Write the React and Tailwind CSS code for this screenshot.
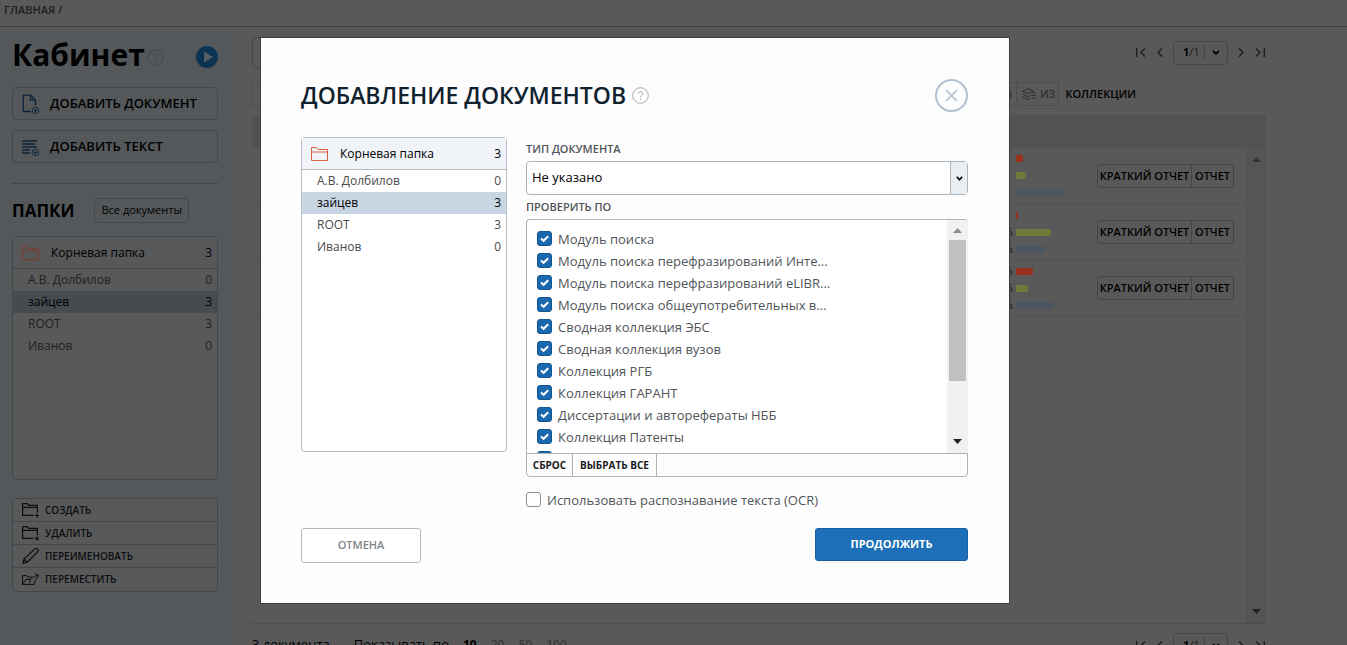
import { useState } from "react";

const folders = [
  { name: "А.В. Долбилов", count: 0 },
  { name: "зайцев", count: 3 },
  { name: "ROOT", count: 3 },
  { name: "Иванов", count: 0 },
];

const modules = [
  "Модуль поиска",
  "Модуль поиска перефразирований Инте...",
  "Модуль поиска перефразирований eLIBR...",
  "Модуль поиска общеупотребительных в...",
  "Сводная коллекция ЭБС",
  "Сводная коллекция вузов",
  "Коллекция РГБ",
  "Коллекция ГАРАНТ",
  "Диссертации и авторефераты НББ",
  "Коллекция Патенты",
  "Коллекция Медицина",
];

const reports = [
  { id: 1, scores: [["7%", 7], ["10%", 10], ["49%", 49]] },
  { id: 2, scores: [["2%", 2], ["35,1%", 35], ["28,9%", 29]] },
  { id: 3, scores: [["17,2%", 17], ["12,4%", 12], ["38,6%", 38]] },
];

const scoreColors = ["bg-[#98301c]", "bg-[#6c7a3a]", "bg-[#4c5660]"];

/* ---------- icons ---------- */

function FolderIcon({ className }) {
  return (
    <svg className={className} viewBox="0 0 17 14" fill="none" stroke="currentColor">
      <path d="M.5 13.500V.5h5l1.500 2h9.500v11zM.5 5h16" />
    </svg>
  );
}

function HelpIcon({ className }) {
  return (
    <svg className={className} viewBox="0 0 17 17" fill="none" stroke="currentColor">
      <circle cx="8.500" cy="8.500" r="7.800" />
      <path d="M6.300 6.800c0-3 4.600-2.900 4.500-.2 0 1.700-2.300 1.600-2.300 3.600M8.500 11.600v1.300" />
    </svg>
  );
}

function FileAddIcon() {
  return (
    <svg className="h-5 w-[18px]" viewBox="0 0 18 20" fill="none" stroke="#0d2338">
      <path d="M9 17.500H1.200V1.200h7.300l5 5v5.300M8.500 1.200v5h5" strokeWidth="1.300" />
      <circle cx="13.500" cy="16.500" r="3.200" />
      <path d="M13.500 15v3M12 16.500h3" />
    </svg>
  );
}

function TextAddIcon() {
  return (
    <svg className="h-5 w-[18px]" viewBox="0 0 18 20" fill="none" stroke="#0d2338">
      <path d="M0 4h15M0 7h13M0 10h15M0 13h8M0 16h8" strokeWidth="1.400" />
      <circle cx="13.500" cy="15.500" r="3.200" />
      <path d="M13.500 14v3M12 15.500h3" />
    </svg>
  );
}

function FolderActionIcon({ kind }) {
  return (
    <svg className="h-4 w-[18px]" viewBox="0 0 18 16" fill="none" stroke="currentColor" strokeWidth="1.200">
      {kind === "create" && (
        <path d="M11.500 13.400H.6V1.600h4.600l1.600 1.700h8.600v7.200M.6 5.300h14.800M15 11.500v4M13 13.500h4" />
      )}
      {kind === "remove" && (
        <path d="M11.500 13.400H.6V1.600h4.600l1.600 1.700h8.600v7.200M.6 5.300h14.800M13.500 12l3 3M16.500 12l-3 3" />
      )}
      {kind === "rename" && (
        <path d="M1 15.300l1-4.200L12.800.9c1.600-1.400 4.300.8 3 2.800L5.200 14.200zM2 11.100l3.200 3.100" />
      )}
      {kind === "move" && (
        <path d="M.6 12.400V3.600h4l1.300 1.500h4M.6 12.400h11.900l1-5M.6 12.400l3.200-5h4M7.500 11c.6-4.600 3-6.700 8.500-7.500M13 1.200l3.500 2.200L14.300 7" strokeWidth="1" />
      )}
    </svg>
  );
}

function LayersIcon() {
  return (
    <svg className="h-3 w-[15px]" viewBox="0 0 15 12" fill="none" stroke="currentColor">
      <path d="M7 .6l5.500 2.700L7 6 1.300 3.300zM1.300 6L7 8.700 9.600 7.500M1.300 8.600L7 11.300l2-1M10.500 7.500H15M10.500 10.200H15M11.500 5H15" />
    </svg>
  );
}

function Arrow({ d }) {
  return (
    <svg className="h-[9px] w-[10px]" viewBox="0 0 10 9" fill="none" stroke="currentColor" strokeWidth="1.300">
      <path d={d} />
    </svg>
  );
}

function Triangle({ down, className }) {
  return (
    <svg className={`h-[5px] w-[9px] ${className}`} viewBox="0 0 9 5" fill="currentColor">
      <path d={down ? "M0 0h9L4.500 5z" : "M0 5h9L4.500 0z"} />
    </svg>
  );
}

/* ---------- page ---------- */

function FolderTree({ dimmed, selected, onSelect, className }) {
  const border = dimmed ? "border-[#42474a]" : "border-[#b4bec6]";
  return (
    <div
      className={`rounded-sm border text-xs ${border} ${dimmed ? "bg-[#595959]" : "bg-white"} ${className}`}
    >
      <button
        className={`flex h-8 w-full items-center border-b pl-[9px] pr-[5px] text-black ${border} ${
          dimmed ? "bg-[#575859]" : "bg-[#f0f4f9]"
        }`}
      >
        <FolderIcon className={`h-[14px] w-[17px] ${dimmed ? "text-[#7c3a2a]" : "text-[#d9623f]"}`} />
        <span className="ml-3">Корневая папка</span>
        <span className="ml-auto">3</span>
      </button>
      <ul>
        {folders.map((folder) => {
          const active = folder.name === selected;
          const text = active ? "text-black" : dimmed ? "text-[#202122]" : "text-[#4a4a4a]";
          const bg = active ? (dimmed ? "bg-[#454b4f]" : "bg-[#c8d6e3]") : "";
          return (
            <li key={folder.name}>
              <button
                onClick={() => onSelect(folder.name)}
                className={`flex h-[22px] w-full items-center justify-between pl-[15px] pr-[5px] ${text} ${bg}`}
              >
                <span>{folder.name}</span>
                <span>{folder.count}</span>
              </button>
            </li>
          );
        })}
      </ul>
    </div>
  );
}

function Sidebar() {
  const [selected, setSelected] = useState("зайцев");
  const actions = [
    { kind: "create", label: "СОЗДАТЬ" },
    { kind: "remove", label: "УДАЛИТЬ" },
    { kind: "rename", label: "ПЕРЕИМЕНОВАТЬ" },
    { kind: "move", label: "ПЕРЕМЕСТИТЬ" },
  ];

  return (
    <aside className="w-[234px] shrink-0 bg-[#55585a] pl-3 pr-4 pt-[10px]">
      <div className="flex h-9 items-center">
        <h1 className="text-[30px] font-bold leading-9 text-black">Кабинет</h1>
        <HelpIcon className="ml-[2px] mt-1 h-[17px] w-[17px] text-[#444749]" />
        <button aria-label="Видео" className="ml-auto mt-1">
          <svg className="h-[22px] w-[22px]" viewBox="0 0 22 22">
            <circle cx="11" cy="11" r="11" fill="#0c3352" />
            <path d="M8 5.500v11l9-5.500z" fill="#595d60" />
          </svg>
        </button>
      </div>

      <div className="mt-[14px] flex flex-col gap-[10px] text-[13px] font-semibold text-black">
        <button className="flex h-[33px] items-center gap-[10px] rounded-sm border border-[#42474a] pl-[9px]">
          <FileAddIcon />
          ДОБАВИТЬ ДОКУМЕНТ
        </button>
        <button className="flex h-[33px] items-center gap-[10px] rounded-sm border border-[#42474a] pl-[9px]">
          <TextAddIcon />
          ДОБАВИТЬ ТЕКСТ
        </button>
      </div>

      <div className="mt-5 flex items-center gap-5 border-t border-[#42474a] pt-[14px]">
        <h2 className="text-[17px] font-bold leading-6 text-black">ПАПКИ</h2>
        <button className="h-[25px] whitespace-nowrap rounded-sm border border-[#42474a] px-[6px] text-[11px] text-black">
          Все документы
        </button>
      </div>

      <FolderTree dimmed selected={selected} onSelect={setSelected} className="mt-[13px] h-[244px]" />

      <div className="mt-[18px] divide-y divide-[#42474a] rounded-sm border border-[#42474a] bg-[#595959]">
        {actions.map((action) => (
          <button
            key={action.kind}
            className="flex h-[23px] w-full items-center gap-[5px] pl-[9px] text-[10px] font-semibold text-[#0c0e10]"
          >
            <FolderActionIcon kind={action.kind} />
            {action.label}
          </button>
        ))}
      </div>
    </aside>
  );
}

function Pager() {
  return (
    <div className="flex items-center text-[#1c1c1c]">
      <button aria-label="В начало"><Arrow d="M1.700 0v9M10 .5l-4 4 4 4" /></button>
      <button aria-label="Назад" className="ml-[10px]"><Arrow d="M7 .5l-4 4 4 4" /></button>
      <button className="ml-2 flex h-6 w-[55px] items-center rounded-sm border border-[#42474a] pl-[9px] text-[11px]">
        <b className="text-black">1</b>/1
        <span className="ml-1 flex h-4 flex-1 items-center justify-center border-l border-[#42474a] text-black">
          <svg className="h-[5px] w-2" viewBox="0 0 8 5" fill="none" stroke="currentColor" strokeWidth="1.800">
            <path d="M1 .8l3 3 3-3" />
          </svg>
        </span>
      </button>
      <button aria-label="Вперёд" className="ml-2"><Arrow d="M3 .5l4 4-4 4" /></button>
      <button aria-label="В конец" className="ml-[10px]"><Arrow d="M8.300 0v9M0 .5l4 4-4 4" /></button>
    </div>
  );
}

function Documents() {
  return (
    <main className="flex min-w-0 flex-1 flex-col pl-[18px] pr-1 pt-[10px]">
      <div className="flex h-[31px] items-center justify-between">
        <input
          aria-label="Поиск"
          className="h-[31px] w-[450px] rounded-sm border border-[#42474a] bg-transparent px-2"
        />
        <Pager />
      </div>

      <div className="mr-[130px] mt-[14px] flex h-6 items-center text-[11px] font-semibold text-[#2f3133]">
        <button className="h-full flex-1 border border-[#4b4f52] pr-1 text-right">ПЕРЕМЕСТИТЬ В</button>
        <button className="flex h-full items-center gap-1 border border-l-0 border-[#4b4f52] pl-1 pr-[3px]">
          <LayersIcon />
          ИЗ
        </button>
        <button className="ml-[6px] text-black">КОЛЛЕКЦИИ</button>
      </div>

      <div className="mt-[9px] h-[33px] bg-[#525254]"></div>
      <div className="flex h-[476px] border-b border-[#4e4e4e]">
        <div className="flex-1">
          <table className="w-full border-collapse">
            <tbody>
              {reports.map((report) => (
                <tr key={report.id} className="h-14 border-b border-[#505050]">
                  <td></td>
                  <td className="w-[115px] p-0 text-[11px] text-[#101010]">
                    {report.scores.map(([value, width], i) => (
                      <div key={value} className="flex h-[17px] items-center">
                        <span className="w-[34px]">{value}</span>
                        <span className={`h-[7px] rounded-r-xs ${scoreColors[i]}`} style={{ width }}></span>
                      </div>
                    ))}
                  </td>
                  <td className="w-[149px] p-0">
                    <div className="flex h-6 w-[137px] divide-x divide-[#42474a] rounded-sm border border-[#42474a] text-[11px] font-semibold text-black">
                      <button className="w-[94px] whitespace-nowrap">КРАТКИЙ ОТЧЕТ</button>
                      <button className="flex-1">ОТЧЕТ</button>
                    </div>
                  </td>
                </tr>
              ))}
            </tbody>
          </table>
        </div>
        <div className="flex w-5 flex-col items-center justify-between bg-[#555556] py-[9px]">
          <Triangle className="text-[#323232]" />
          <Triangle down className="text-[#222222]" />
        </div>
      </div>

      <div className="mt-[9px] flex items-center justify-between text-[13px]">
        <div className="flex items-center text-black">
          <span>3 документа</span>
          <span className="ml-6">Показывать по</span>
          <button className="ml-[14px] text-xs font-bold">10</button>
          <button className="ml-[14px] text-xs font-semibold text-[#3a3a3a]">20</button>
          <button className="ml-[14px] text-xs font-semibold text-[#3a3a3a]">50</button>
          <button className="ml-[14px] text-xs font-semibold text-[#3a3a3a]">100</button>
        </div>
        <Pager />
      </div>
    </main>
  );
}

/* ---------- dialog ---------- */

function Tick({ label, checked, onChange, className }) {
  return (
    <label className={`flex h-[22px] items-start gap-[6px] whitespace-nowrap text-[13px] leading-[22px] text-[#50555a] ${className}`}>
      <span className="mt-[3px] grid h-[15px] w-[15px] shrink-0">
        <input
          type="checkbox"
          checked={checked}
          onChange={onChange}
          className="peer col-start-1 row-start-1 appearance-none rounded-[3px] border border-[#8a8f94] bg-white checked:border-[#14558c] checked:bg-[#1a68b0]"
        />
        <svg
          className="pointer-events-none invisible col-start-1 row-start-1 peer-checked:visible"
          viewBox="0 0 15 15"
          fill="none"
          stroke="white"
          strokeWidth="2"
        >
          <path d="M4 7.500l2.600 2.300L11.200 5.300" />
        </svg>
      </span>
      {label}
    </label>
  );
}

function AddDocumentsDialog() {
  const [folder, setFolder] = useState("зайцев");
  const [checked, setChecked] = useState(modules);
  const [ocr, setOcr] = useState(false);

  const toggle = (name) =>
    setChecked((prev) => (prev.includes(name) ? prev.filter((m) => m !== name) : [...prev, name]));

  return (
    <div
      role="dialog"
      aria-labelledby="dialog-title"
      className="w-[750px] border border-[#3c3c3c] bg-[#fdfdfe] pb-10 pl-10 pr-[41px] pt-[41px]"
    >
      <div className="flex h-[33px] items-center">
        <h2 id="dialog-title" className="whitespace-nowrap text-[23px] font-semibold text-[#10222e]">
          ДОБАВЛЕНИЕ ДОКУМЕНТОВ
        </h2>
        <HelpIcon className="ml-[6px] h-[17px] w-[17px] text-[#a8a8a8]" />
        <button aria-label="Закрыть" className="ml-auto text-[#b3c0d2]">
          <svg className="h-[33px] w-[33px]" viewBox="0 0 33 33" fill="none" stroke="currentColor" strokeWidth="2">
            <circle cx="16.500" cy="16.500" r="15.500" />
            <path d="M11 11l11 11M22 11L11 22" strokeWidth="1.700" />
          </svg>
        </button>
      </div>

      <div className="mt-[25px] flex items-start gap-[19px]">
        <FolderTree selected={folder} onSelect={setFolder} className="h-[315px] w-[206px] shrink-0" />

        <div className="min-w-0 flex-1">
          <label htmlFor="doc-type" className="flex h-6 items-center text-[11px] font-semibold text-[#50555a]">
            ТИП ДОКУМЕНТА
          </label>
          <div className="relative">
            <select
              id="doc-type"
              className="h-[34px] w-full appearance-none rounded-sm border border-[#aab4bc] bg-white pl-[5px] text-[13px] text-black"
            >
              <option>Не указано</option>
            </select>
            <span className="pointer-events-none absolute inset-y-px right-px flex w-[17px] items-center justify-center border-l border-[#aab4bc] bg-[#e9eef3] text-black">
              <svg className="h-[5px] w-[7px]" viewBox="0 0 7 5" fill="none" stroke="currentColor" strokeWidth="1.600">
                <path d="M.8.7l2.700 3 2.700-3" />
              </svg>
            </span>
          </div>

          <fieldset>
            <legend className="flex h-6 items-center text-[11px] font-semibold text-[#50555a]">ПРОВЕРИТЬ ПО</legend>
            <div className="flex h-[234px] overflow-hidden rounded-t-sm border-l border-t border-[#aab4bc] bg-white">
              <div className="flex-1 pl-[10px] pt-2">
                {modules.map((name) => (
                  <Tick key={name} label={name} checked={checked.includes(name)} onChange={() => toggle(name)} />
                ))}
              </div>
              <div className="flex w-[21px] flex-col items-center bg-[#f1f1f1] pb-[9px] pt-2">
                <Triangle className="text-[#8c8c8c]" />
                <div className="mt-[7px] h-[141px] w-[17px] bg-[#c0c0c0]"></div>
                <Triangle down className="mt-auto text-[#222222]" />
              </div>
            </div>
            <div className="flex h-6 divide-x divide-[#aab4bc] rounded-b-sm border border-[#aab4bc] text-[10px] font-bold text-[#16191c]">
              <button onClick={() => setChecked([])} className="w-[46px]">СБРОС</button>
              <button onClick={() => setChecked(modules)} className="w-[84px] whitespace-nowrap">
                ВЫБРАТЬ ВСЕ
              </button>
              <span></span>
            </div>
          </fieldset>

          <Tick
            label="Использовать распознавание текста (OCR)"
            checked={ocr}
            onChange={() => setOcr(!ocr)}
            className="mt-3"
          />
        </div>
      </div>

      <div className="mt-[17px] flex items-start justify-between text-[11px]">
        <button className="h-[35px] w-[120px] rounded-[3px] border border-[#b5b9bd] bg-white font-semibold text-[#808488]">
          ОТМЕНА
        </button>
        <button className="h-[33px] w-[153px] rounded-[3px] border border-[#185f9e] bg-[#1d70b7] font-bold text-white">
          ПРОДОЛЖИТЬ
        </button>
      </div>
    </div>
  );
}

export default function App() {
  return (
    <div className="flex h-screen flex-col overflow-hidden bg-[#595959] font-['Open_Sans',sans-serif]">
      <header className="h-[27px] shrink-0 border-b border-[#404040] px-1 pt-[2px]">
        <a href="#" className="block text-[11px] font-semibold leading-4 text-[#1e1e1e]">
          ГЛАВНАЯ /
        </a>
      </header>
      <div className="flex w-full max-w-[1270px] flex-1">
        <Sidebar />
        <Documents />
      </div>

      {/* Dialog over the page, centred on the content column */}
      <div className="fixed inset-0 z-50">
        <div className="flex max-w-[1270px] items-start justify-center pt-[37px]">
          <AddDocumentsDialog />
        </div>
      </div>
    </div>
  );
}
